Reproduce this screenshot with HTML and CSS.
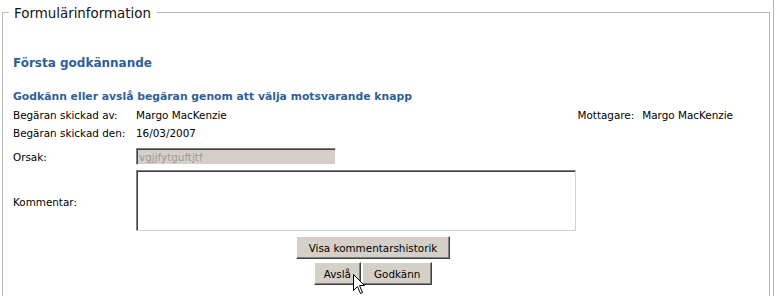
FILE: index.html
```html
<!DOCTYPE html>
<html lang="sv">
<head>
<meta charset="utf-8">
<title>Formulärinformation</title>
<link rel="stylesheet" href="styles.css">
</head>
<body>
<div class="page">
  <fieldset class="box">
    <legend class="box-title">Formulärinformation</legend>
    <h3 class="title">Första godkännande</h3>
    <h4 class="subtitle">Godkänn eller avslå begäran genom att välja motsvarande knapp</h4>
    <div class="form">
      <div class="label row">Begäran skickad av:</div>
      <div class="value row">Margo MacKenzie</div>
      <div class="recipient row">Mottagare:<span class="recipient-name">Margo MacKenzie</span></div>

      <div class="label row">Begäran skickad den:</div>
      <div class="value row span2">16/03/2007</div>

      <div class="label row mid">Orsak:</div>
      <div class="span2 field-row"><input class="reason" type="text" value="vgjjfytguftjtf" disabled></div>

      <div class="label row comment-label">Kommentar:</div>
      <div class="span2 field-row2"><textarea class="comment"></textarea></div>

      <div class="actions">
        <button class="btn btn-history" type="button">Visa kommentarshistorik</button>
        <div class="btn-pair">
          <button class="btn btn-reject" type="button">Avslå</button>
          <button class="btn btn-approve" type="button">Godkänn</button>
        </div>
      </div>
    </div>
  </fieldset>
  <svg class="cursor" width="13" height="21" viewBox="0 0 13 21" aria-hidden="true">
    <path d="M0.5 0.5 L0.5 16.5 L4.5 12.5 L7.5 19.5 L9.5 18.5 L6.5 11.5 L11.5 11.5 Z" fill="#fff" stroke="#000" stroke-width="1" stroke-linejoin="miter"/>
  </svg>
</div>
</body>
</html>
```

FILE: styles.css
```css
html, body {
  margin: 0;
  padding: 0;
  background: #fff;
}

body {
  font-family: "DejaVu Sans", Verdana, sans-serif;
  font-size: 10.4px;
  color: #000;
  overflow: hidden;
}

.page {
  position: relative;
  box-sizing: border-box;
  width: 774px;
  height: 296px;
  padding: 2px 0 0 2px;
  border-right: 1px solid #b4b4b4;
  overflow: hidden;
}

.box {
  box-sizing: border-box;
  width: 768px;
  margin: 0;
  padding: 0 10px 20px 10px;
  border: 1px solid #b9b9b9;
  min-inline-size: 0;
}

.box-title {
  margin-left: -4px;
  padding: 3px 6px 0 5px;
  font-size: 13.4px;
  line-height: 18px;
  color: #111;
}

.title {
  margin: 32px 0 0 0;
  font-size: 12px;
  line-height: 16px;
  font-weight: bold;
  color: #2e5f98;
}

.subtitle {
  margin: 19px 0 0 0;
  font-size: 10.8px;
  line-height: 14px;
  font-weight: bold;
  color: #2e5f98;
}

.form {
  width: 720px;
  margin-top: 2px;
  display: grid;
  grid-template-columns: 123px 1fr auto;
}

.row {
  line-height: 18px;
  white-space: nowrap;
}

.span2 {
  grid-column: span 2;
}

.recipient {
  text-align: right;
}

.recipient-name {
  margin-left: 8px;
}

.mid {
  align-self: center;
  margin-top: 6px;
}

.field-row {
  margin-top: 6px;
  display: flex;
}

.reason {
  box-sizing: border-box;
  width: 200px;
  height: 17px;
  margin: 0;
  padding: 0 2px;
  font-family: "DejaVu Sans", Verdana, sans-serif;
  font-size: 10.4px;
  color: #9a9a9a;
  background: #d4d0c8;
  border-style: solid;
  border-width: 1px;
  border-color: #808080 #ffffff #ffffff #808080;
  box-shadow: inset 1px 1px #404040, inset -1px -1px #d4d0c8;
  outline: none;
}

.comment-label {
  align-self: center;
  margin-top: 6px;
}

.field-row2 {
  margin-top: 4px;
  display: flex;
}

.comment {
  display: block;
  box-sizing: border-box;
  width: 440px;
  height: 61px;
  margin: 0;
  padding: 2px;
  resize: none;
  background: #fff;
  border-style: solid;
  border-width: 1px;
  border-color: #808080 #d4d0c8 #d4d0c8 #808080;
  box-shadow: inset 1px 1px #404040;
  font-family: "DejaVu Sans", Verdana, sans-serif;
  font-size: 10.4px;
}

.actions {
  grid-column: 1 / -1;
  margin-top: 5px;
  display: flex;
  flex-direction: column;
  align-items: center;
  gap: 3px;
}

.btn-pair {
  display: flex;
  gap: 1px;
}

.btn {
  box-sizing: border-box;
  height: 23px;
  margin: 0;
  padding: 0 10px;
  font-family: "DejaVu Sans", Verdana, sans-serif;
  font-size: 10.4px;
  color: #000;
  background: #d4d0c8;
  border-style: solid;
  border-width: 1px;
  border-color: #ffffff #404040 #404040 #ffffff;
  box-shadow: inset -1px -1px #808080;
  border-radius: 0;
}

.btn-history {
  padding: 0 12px 0 12px;
}

.btn-reject {
  padding: 0 9px 0 9px;
}

.btn-approve {
  padding: 0 11px;
}

.cursor {
  position: absolute;
  left: 353px;
  top: 274px;
}
```
